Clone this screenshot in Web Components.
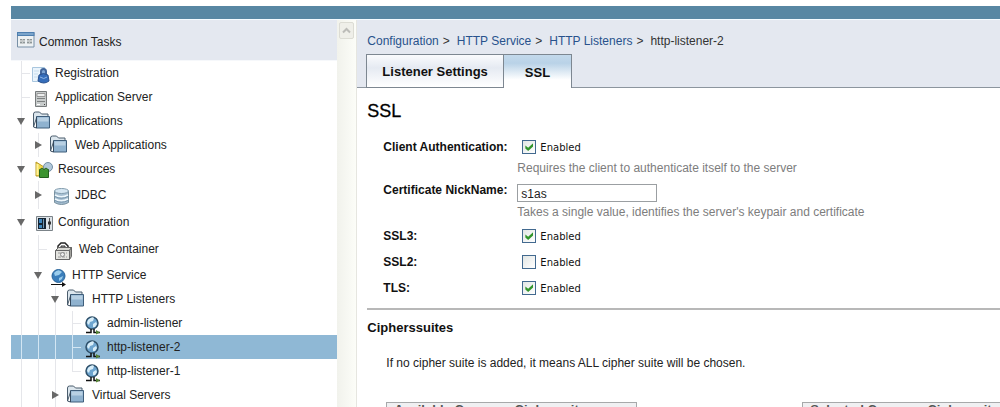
<!DOCTYPE html>
<html lang="en">
<head>
<meta charset="utf-8">
<title>HTTP Listener - SSL</title>
<style>
html,body{margin:0;height:100%;overflow:hidden;background:#fff}
body{font:12px "Liberation Sans",Arial,sans-serif;color:#222}
</style>
</head>
<body>
<admin-console>
  <task-tree slot="nav">
    <tree-item depth="1" icon="registration">Registration</tree-item>
    <tree-item depth="1" icon="server">Application Server</tree-item>
    <tree-item depth="1" icon="folder" state="open">Applications</tree-item>
    <tree-item depth="2" icon="folder" state="closed">Web Applications</tree-item>
    <tree-item depth="1" icon="resources" state="open">Resources</tree-item>
    <tree-item depth="2" icon="database" state="closed" size="large">JDBC</tree-item>
    <tree-item depth="1" icon="config" state="open" size="medium">Configuration</tree-item>
    <tree-item depth="2" icon="container" size="large">Web Container</tree-item>
    <tree-item depth="2" icon="service" state="open">HTTP Service</tree-item>
    <tree-item depth="3" icon="folder" state="open">HTTP Listeners</tree-item>
    <tree-item depth="4" icon="listener">admin-listener</tree-item>
    <tree-item depth="4" icon="listener" selected>http-listener-2</tree-item>
    <tree-item depth="4" icon="listener" last>http-listener-1</tree-item>
    <tree-item depth="3" icon="folder" state="closed">Virtual Servers</tree-item>
  </task-tree>
  <page-header slot="main"></page-header>
  <ssl-form slot="main"></ssl-form>
</admin-console>
<script>
const define = (name, html) => customElements.define(name, class extends HTMLElement {
  constructor(){
    super();
    const t = document.createElement('template');
    t.innerHTML = html;
    this.attachShadow({mode:'open'}).append(t.content.cloneNode(true));
  }
});

define('admin-console', `
<style>
:host{display:flex;flex-direction:column;box-sizing:border-box;height:100vh;padding:6px 0 0 11px;overflow:hidden}
header{flex:none;height:13px;background:#5887a3;border-bottom:1px solid #f4fbff}
.body{flex:1;min-height:0;display:grid;grid-template-columns:33% 20px minmax(0,1fr)}
nav,main{min-width:0;overflow:hidden}
.scroll{box-sizing:border-box;background:linear-gradient(90deg,#f1f2ec,#fcfdf8);border-right:1px solid #e6e6e0;padding:2px}
button{display:flex;align-items:center;justify-content:center;box-sizing:border-box;width:15px;height:17px;padding:0;border:1px solid #dcdcd4;border-radius:2px;background:#efefe9}
</style>
<header></header>
<div class="body">
  <nav aria-label="Common Tasks"><slot name="nav"></slot></nav>
  <div class="scroll"><button aria-label="Scroll up"><svg width="9" height="7"><path d="M1 5.5 4.5 2 8 5.5" fill="none" stroke="#bcbcb8" stroke-width="2"/></svg></button></div>
  <main><slot name="main"></slot></main>
</div>`);

define('task-tree', `
<style>
:host{display:block}
.top{display:flex;align-items:center;gap:4px;box-sizing:border-box;height:41px;padding:4px 0 0 6px;background:#e4e8f0;border-bottom:1px solid #f6f8fb}
svg{margin-bottom:4px}
</style>
<div class="top"><svg width="18" height="18"><path d="M.5 1.5h16.5v14.500H.5z" fill="#edf1f3" stroke="#7890a6"/><path d="M0 1h17.500v4H0z" fill="#4e7fb0"/><path d="M1 3h15.500" stroke="#a8cbe6"/><path d="M3 8h5v5H3zM10 8h5v5h-5z" fill="#c5c9c9"/><path d="M3 8.500h2m1 0h2m2 0h2m1 0h2M3 11.500h2m1 0h2m2 0h2m1 0h2" stroke="#8e9799"/></svg><span>Common Tasks</span></div>
<slot></slot>`);

const icons = {
registration:[25,`<path d="M2.500 6.500h12v14h-12z" fill="#eaf4fc" stroke="#a9c6de"/><path d="M4 10h5M4 13h4M4 16h4" stroke="#c8ddec"/><path d="M11 14v-3.500a2.500 2.500 0 0 1 5 0V14" fill="#7da5d4" stroke="#41659b" stroke-width="2"/><path d="M9 14q4.500-3 9 0l1 6q-5 4-11 0z" fill="#356dba" stroke="#29518e"/><path d="M10 16q4 3 7 0" stroke="#8db5e6" fill="none"/>`],
server:[25,`<path d="M5.500 6.500h11v15h-11z" fill="#c8cccc" stroke="#777b7c"/><path d="M7 8.500h8v3H7z" fill="#eceeee" stroke="#999"/><path d="M7 13.500h8M7 16.500h8" stroke="#7d8181"/><path d="M7 19.500h3" stroke="#fff"/><path d="M14 19.500h1" stroke="#444"/>`],
folder:[28,`<path d="M3.500 18V5q0-2 2-2h4l2 2h6.500v2.500h-11z" fill="#dce6ed" stroke="#4b5d6d"/><path d="M6.500 7.500h13v11.500h-13z" fill="#8fb2cf" stroke="#3f5e7b"/><path d="M7.500 8.500h11v4h-11z" fill="#b8d0e3"/><path d="M3.500 18l3 1V8" fill="none" stroke="#35495d"/>`],
resources:[28,`<path d="M6 5l8 5v9H6z" fill="#f0d64b" stroke="#b99a28"/><path d="M7.500 7v11" stroke="#fff39b" stroke-width="2"/><circle cx="18" cy="10" r="4.500" fill="#b1c8da" stroke="#748fa5"/><path d="M9.500 12.500h9v8h-9z" fill="#3c9430" stroke="#24611e"/><path d="M10 12.500q2-3 4 0 2-3 4 0" fill="#79bd5d" stroke="#28631f"/>`],
database:[28,`<path d="M7.500 8v11.500q7 4 14 0V8" fill="#a6bfd2" stroke="#78909f"/><ellipse cx="14.500" cy="8" rx="7" ry="2.500" fill="#d5e6f2" stroke="#839dae"/><path d="M8 12q6 3.500 13 0M8 16q6 3.500 13 0" fill="none" stroke="#eef7fc" stroke-width="1.500"/><path d="M8 13.500q6 3.500 13 0M8 17.500q6 3.500 13 0" fill="none" stroke="#7895ac"/>`],
config:[28,`<path d="M6.500 6.500h16v14h-16z" fill="#dce2e7" stroke="#7b8388"/><path d="M8 8h8v11H8z" fill="#142433"/><path d="M9 9h3v4H9zM9 15h3v3H9z" fill="#3d86bd"/><path d="M13.500 9v9" stroke="#7497b0"/><path d="M19.500 8v11" stroke="#555"/><path d="M18 13h3" stroke="#333" stroke-width="3"/>`],
container:[32,`<path d="M11 12V9l3-3h4l3 3v3" fill="#fff" stroke="#252525" stroke-width="1.500"/><path d="M14 11V9h4v2" fill="#aaa" stroke="#333"/><path d="M8.500 13.500l3-3h13l-2 3z" fill="#d8d8d3" stroke="#666"/><path d="M8.500 13.500h14v9h-14z" fill="#e3e3df" stroke="#666"/><path d="M22.500 13.500l2-3v9l-2 3z" fill="#a3a39e" stroke="#666"/><path d="M11 16h9M11 20h9" stroke="#999" stroke-dasharray="3 1"/><circle cx="15.500" cy="17.500" r="2" fill="#eee" stroke="#888"/>`],
service:[25,`<circle cx="11.500" cy="13" r="6.500" fill="#3b7ebb" stroke="#28649a"/><path d="M7 10q4-5 8-1l-3 3-4 1zM12 15l4-2-1 3-3 2z" fill="#9bcdec"/><path d="M4 21.500h14" stroke="#111"/><path d="M15 19l4 2.500-4 2.500z" fill="#111"/>`],
listener:[26,`<circle cx="11" cy="12" r="6" fill="#6ea5cf" stroke="#2f5069" stroke-width="1.500"/><path d="M7 9q4-4 6-2l-1 3-3 1-1 3-2-2zM12 13l3-2 1 2-2 3-2 0z" fill="#d8edf8"/><path d="M10 18v3.500H5M13 18v3.500h6" fill="none" stroke="#111" stroke-width="1.500"/><path d="M15 19l4 2.500-4 2z" fill="#568335"/>`]
};

customElements.define('tree-item', class extends HTMLElement {
  constructor(){ super(); this.attachShadow({mode:'open'}); }
  connectedCallback(){
    const depth = +this.getAttribute('depth'), state = this.getAttribute('state');
    const [width, art] = icons[this.getAttribute('icon')];
    let cells = '';
    for (let i = 1; i <= depth; i++) {
      const own = i === depth;
      if (own && state) cells += `<button class="cell" aria-label="Toggle" aria-expanded="${state === 'open'}"><svg width="9" height="9"><path d="${state === 'open' ? 'M0 1h8L4 8z' : 'M1 0v8l7-4z'}" fill="#686868"/></svg></button>`;
      else cells += `<i class="cell${own ? ' tick' : ''}${own && this.hasAttribute('last') ? ' last' : ''}"></i>`;
    }
    this.shadowRoot.innerHTML = `
<style>
:host{display:flex;height:24px;padding-left:2px;--line:#e5e6ea;white-space:nowrap}
:host([size=medium]){height:26px}
:host([size=large]){height:28px}
:host([selected]){background:#8fb8d5;--line:#d3e6f3}
.cell{flex:none;box-sizing:border-box;display:flex;align-items:center;justify-content:center;width:17px;padding:0;border:0;background:linear-gradient(var(--line),var(--line)) 8px 0/1px 100% no-repeat}
.tick{background:linear-gradient(var(--line),var(--line)) 8px 0/1px 100% no-repeat,linear-gradient(var(--line),var(--line)) 8px 50%/9px 1px no-repeat}
.last{background-size:1px 50%,9px 1px}
a{display:flex;align-items:center;color:inherit;text-decoration:none}
</style>${cells}<a href="#"><svg width="${width}" height="24" aria-hidden="true">${art}</svg><slot></slot></a>`;
  }
});

define('page-header', `
<style>
:host{display:block;background:#e4e8f0}
nav{display:flex;align-items:center;gap:4px;box-sizing:border-box;height:34px;padding:8px 10px 0;color:#333}
a{color:#28528c;text-decoration:none}
nav a:not(:first-child),nav b{margin-left:3px}
nav b{font-weight:400}
.tabs{display:flex;height:34px;padding-left:9px;background:linear-gradient(#8c959e,#8c959e) 0 100%/100% 1px no-repeat}
button{box-sizing:border-box;height:34px;border:1px solid #7d8791;padding:0 15px;font:bold 13px "Liberation Sans",Arial,sans-serif;color:#111;background:linear-gradient(#fafbfd,#e5eaf2 40%,#fff)}
button[aria-selected=true]{padding:2px 21px 0;border-left:0;border-bottom:0;background:linear-gradient(#c3d9eb,#b9d2e7 25%,#fff 75%)}
</style>
<nav aria-label="Breadcrumb"><a href="#">Configuration</a><span>&gt;</span><a href="#">HTTP Service</a><span>&gt;</span><a href="#">HTTP Listeners</a><span>&gt;</span><b>http-listener-2</b></nav>
<div class="tabs" role="tablist"><button role="tab" aria-selected="false">Listener Settings</button><button role="tab" aria-selected="true">SSL</button></div>`);

customElements.define('form-row', class extends HTMLElement {
  constructor(){ super(); this.attachShadow({mode:'open'}); }
  connectedCallback(){
    const label = this.getAttribute('label'), hint = this.getAttribute('hint'), value = this.getAttribute('value');
    const field = value !== null
      ? `<label class="name" for="f">${label}</label><div><input id="f" type="text" value="${value}">`
      : `<span class="name" id="n">${label}</span><div role="group" aria-labelledby="n"><label class="tick"><input type="checkbox" ${this.hasAttribute('checked') ? 'checked' : ''}>Enabled</label>`;
    this.shadowRoot.innerHTML = `
<style>
:host{display:grid;grid-template-columns:134px 1fr;padding-left:16px}
.name{font-weight:bold;font-size:12px;line-height:26px;white-space:nowrap;color:#111}
.tick{display:flex;align-items:center;gap:4px;height:26px;padding-left:5px;font:10px "DejaVu Sans",sans-serif;color:#111}
input[type=checkbox]{appearance:none;display:grid;place-items:center;box-sizing:border-box;width:14px;height:14px;margin:0;border:1px solid #42698f;background:linear-gradient(135deg,#e2e6e4,#fff)}
input:checked::before{content:"";width:8px;height:8px;background:#32952b;clip-path:polygon(0 30%,35% 60%,100% 0,100% 40%,35% 100%,0 70%)}
input[type=text]{display:block;box-sizing:border-box;width:140px;height:18px;margin:7px 0 2px;padding:1px 3px 0;border:1px solid #9b9fa2;background:#fff;color:#222;font:12px "Liberation Sans",Arial,sans-serif}
p{margin:0;line-height:16px;color:#7d7d7d}
</style>${field}${hint ? `<p>${hint}</p>` : ''}</div>`;
  }
});

define('ssl-form', `
<style>
:host{display:block;padding:11px 0 0 10px}
h1{margin:0 0 11px;font-size:18px;line-height:24px;font-weight:400;color:#000;-webkit-text-stroke:.3px #000}
form-row[value]{margin-bottom:3px}
form-row.gap{margin-bottom:1px}
hr{height:2px;margin:7px 0 9px;border:0;background:#b8b8b8}
h2{margin:0;font-size:13px;line-height:18px;color:#111}
p{margin:18px 0 31px 19px;line-height:16px}
.lists{display:grid;grid-template-columns:251px 251px;column-gap:165px;padding-left:19px}
.lists div{box-sizing:border-box;border:1px solid #a7a9aa;background:#f0f0f2;padding:0 7px;font-size:13px;font-weight:bold;line-height:14px;color:#555;height:120px}
</style>
<h1>SSL</h1>
<form-row class="gap" label="Client Authentication:" checked hint="Requires the client to authenticate itself to the server"></form-row>
<form-row label="Certificate NickName:" value="s1as" hint="Takes a single value, identifies the server's keypair and certificate"></form-row>
<form-row label="SSL3:" checked></form-row>
<form-row label="SSL2:"></form-row>
<form-row label="TLS:" checked></form-row>
<hr>
<h2>Cipherssuites</h2>
<p>If no cipher suite is added, it means ALL cipher suite will be chosen.</p>
<div class="lists"><div>Available Common Ciphersuites:</div><div>Selected Common Ciphersuites:</div></div>`);
</script>
</body>
</html>
